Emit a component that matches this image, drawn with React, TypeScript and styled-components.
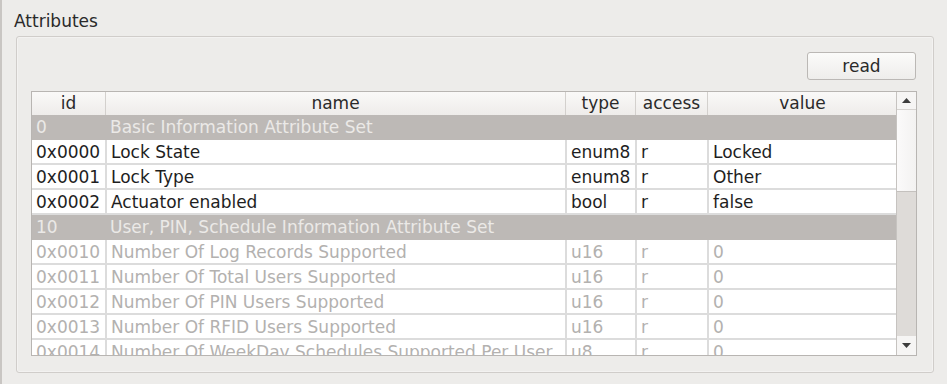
import React from "react";
import styled, { createGlobalStyle } from "styled-components";

const GlobalStyle = createGlobalStyle`
  html, body {
    margin: 0;
    padding: 0;
    background: #edecea;
  }
  body {
    font-family: "DejaVu Sans", "Liberation Sans", sans-serif;
    font-size: 17px;
    color: #222;
  }
`;

const COLS = [73, 460, 70, 72, 190];

type Row =
  | { kind: "group"; id: string; name: string }
  | { kind: "attr"; id: string; name: string; type: string; access: string; value: string; disabled?: boolean };

const ROWS: Row[] = [
  { kind: "group", id: "0", name: "Basic Information Attribute Set" },
  { kind: "attr", id: "0x0000", name: "Lock State", type: "enum8", access: "r", value: "Locked" },
  { kind: "attr", id: "0x0001", name: "Lock Type", type: "enum8", access: "r", value: "Other" },
  { kind: "attr", id: "0x0002", name: "Actuator enabled", type: "bool", access: "r", value: "false" },
  { kind: "group", id: "10", name: "User, PIN, Schedule Information Attribute Set" },
  { kind: "attr", id: "0x0010", name: "Number Of Log Records Supported", type: "u16", access: "r", value: "0", disabled: true },
  { kind: "attr", id: "0x0011", name: "Number Of Total Users Supported", type: "u16", access: "r", value: "0", disabled: true },
  { kind: "attr", id: "0x0012", name: "Number Of PIN Users Supported", type: "u16", access: "r", value: "0", disabled: true },
  { kind: "attr", id: "0x0013", name: "Number Of RFID Users Supported", type: "u16", access: "r", value: "0", disabled: true },
  { kind: "attr", id: "0x0014", name: "Number Of WeekDay Schedules Supported Per User", type: "u8", access: "r", value: "0", disabled: true },
];

const Page = styled.div`
  width: 945px;
  height: 384px;
  border-left: 2px solid #c9c6c3;
  overflow: hidden;
  display: flex;
  flex-direction: column;
`;

const Title = styled.div`
  margin: 11px 0 0 12px;
  height: 20px;
  line-height: 20px;
  color: #2a2a2a;
`;

const GroupBox = styled.div`
  margin: 5px 0 0 14px;
  width: 918px;
  height: 337px;
  box-sizing: border-box;
  border: 1px solid #d0cdca;
  border-radius: 3px;
  box-shadow: inset 0 0 0 1px rgba(255, 255, 255, 0.35);
  padding: 15px 17px 16px 14px;
  display: flex;
  flex-direction: column;
  gap: 11px;
`;

const ButtonRow = styled.div`
  display: flex;
  justify-content: flex-end;
`;

const Button = styled.button`
  width: 109px;
  height: 28px;
  box-sizing: border-box;
  border: 1px solid #bbb8b5;
  border-radius: 3px;
  background: linear-gradient(#fbfbfa, #eeedeb);
  font-family: inherit;
  font-size: 17px;
  color: #2a2a2a;
  padding: 0;
  line-height: 26px;
`;

const Table = styled.div`
  width: 886px;
  height: 265px;
  box-sizing: border-box;
  border: 1px solid #b8b5b2;
  display: flex;
  background: #fff;
  overflow: hidden;
`;

const Grid = styled.div`
  width: 865px;
  display: flex;
  flex-direction: column;
  overflow: hidden;
`;

const HeaderRow = styled.div`
  display: flex;
  height: 23px;
  flex: none;
  background: linear-gradient(#faf9f8, #eeecea);
`;

const HeaderCell = styled.div<{ $w: number; $first?: boolean }>`
  width: ${(p) => p.$w}px;
  flex: none;
  box-sizing: border-box;
  text-align: center;
  line-height: 23px;
  color: #2a2a2a;
  border-left: ${(p) => (p.$first ? "none" : "1px solid #d3d0cd")};
`;

const BodyRow = styled.div<{ $group?: boolean; $disabled?: boolean }>`
  display: flex;
  height: 25px;
  flex: none;
  box-sizing: border-box;
  background: ${(p) => (p.$group ? "#bdb9b6" : "#fff")};
  color: ${(p) => (p.$group ? "#ebe9e7" : p.$disabled ? "#b3b1af" : "#1e1e1e")};
  border-bottom: ${(p) => (p.$group ? "none" : "2px solid #dcdcdc")};
`;

const Cell = styled.div<{ $w: number; $first?: boolean; $line?: boolean }>`
  width: ${(p) => p.$w}px;
  flex: none;
  box-sizing: border-box;
  padding-left: 4px;
  line-height: 24px;
  white-space: nowrap;
  overflow: hidden;
  border-left: ${(p) => (p.$line && !p.$first ? "2px solid #dcdcdc" : "none")};
`;

const GroupName = styled.div`
  flex: 1;
  padding-left: 5px;
  line-height: 25px;
  white-space: nowrap;
`;

const ScrollBar = styled.div`
  width: 19px;
  flex: none;
  border-left: 1px solid #c6c3c0;
  display: flex;
  flex-direction: column;
  background: #dedbd8;
`;

const ScrollButton = styled.div<{ $h: number }>`
  height: ${(p) => p.$h}px;
  flex: none;
  background: #f6f5f4;
  display: flex;
  align-items: center;
  justify-content: center;
`;

const Handle = styled.div`
  height: 83px;
  flex: none;
  box-sizing: border-box;
  border-top: 1px solid #d6d3d0;
  border-bottom: 1px solid #c4c1be;
  background: linear-gradient(90deg, #fbfafa, #f3f2f1);
`;

const Track = styled.div`
  flex: 1;
`;

const Arrow = ({ up }: { up?: boolean }) => (
  <svg width="9" height="5" viewBox="0 0 9 5">
    {up ? <polygon points="0,5 9,5 4.5,0" fill="#3c3c3c" /> : <polygon points="0,0 9,0 4.5,5" fill="#3c3c3c" />}
  </svg>
);

const HEADERS = ["id", "name", "type", "access", "value"];

export default function App() {
  return (
    <>
      <GlobalStyle />
      <Page>
        <Title>Attributes</Title>
        <GroupBox>
          <ButtonRow>
            <Button>read</Button>
          </ButtonRow>
          <Table>
            <Grid>
              <HeaderRow>
                {HEADERS.map((h, i) => (
                  <HeaderCell key={h} $w={COLS[i]} $first={i === 0}>
                    {h}
                  </HeaderCell>
                ))}
              </HeaderRow>
              {ROWS.map((r) =>
                r.kind === "group" ? (
                  <BodyRow key={r.id} $group>
                    <Cell $w={COLS[0]} $first>
                      {r.id}
                    </Cell>
                    <GroupName>{r.name}</GroupName>
                  </BodyRow>
                ) : (
                  <BodyRow key={r.id} $disabled={r.disabled}>
                    {[r.id, r.name, r.type, r.access, r.value].map((v, i) => (
                      <Cell key={i} $w={COLS[i]} $first={i === 0} $line>
                        {v}
                      </Cell>
                    ))}
                  </BodyRow>
                )
              )}
            </Grid>
            <ScrollBar>
              <ScrollButton $h={17}>
                <Arrow up />
              </ScrollButton>
              <Handle />
              <Track />
              <ScrollButton $h={19}>
                <Arrow />
              </ScrollButton>
            </ScrollBar>
          </Table>
        </GroupBox>
      </Page>
    </>
  );
}
